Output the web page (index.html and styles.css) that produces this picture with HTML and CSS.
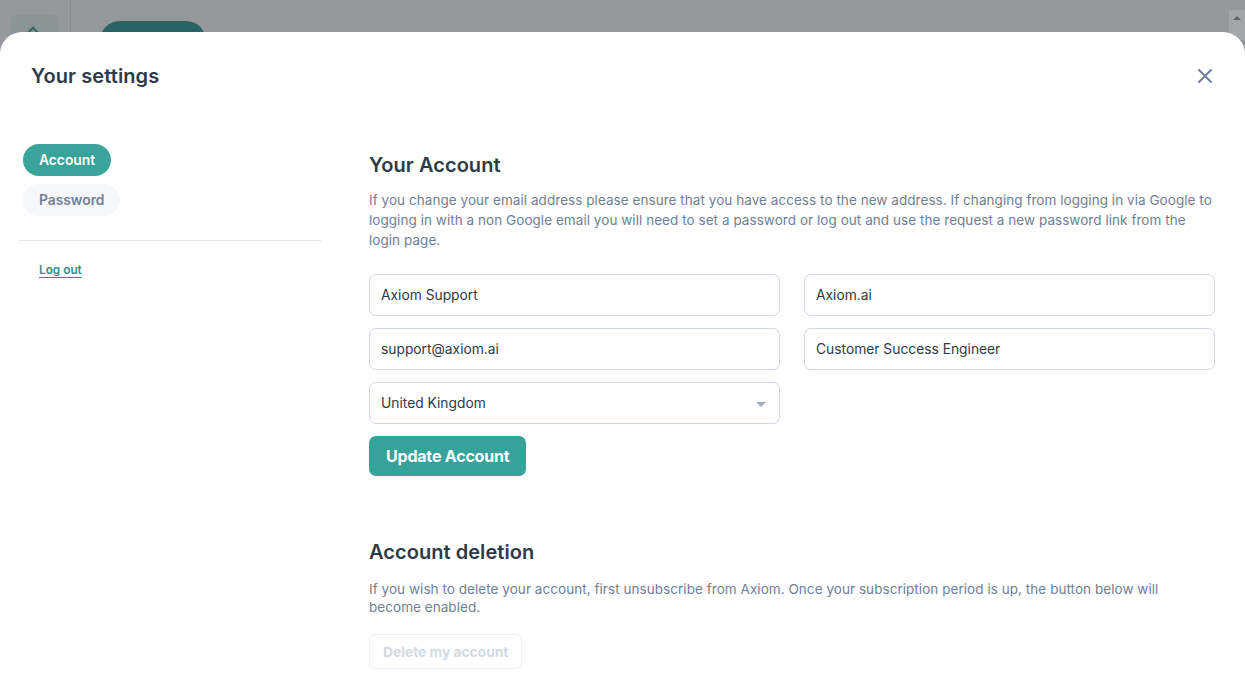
FILE: index.html
```html
<!DOCTYPE html>
<html>
<head>
<meta charset="utf-8">
<link rel="stylesheet" href="styles.css">
</head>
<body>
<div class="backdrop">
  <div class="bg-bar">
    <div class="bg-square"><span class="bg-caret"></span></div>
    <div class="bg-sep"></div>
    <div class="bg-btn"></div>
  </div>
  <div class="scrollbar"><span class="scroll-up"></span></div>
</div>
<div class="modal">
  <div class="modal-header">
    <h1 class="modal-title">Your settings</h1>
    <button class="close-btn" aria-label="Close">
      <svg width="14" height="14" viewBox="0 0 14 14"><path d="M1 1 L13 13 M13 1 L1 13" stroke="#718096" stroke-width="2" stroke-linecap="round"/></svg>
    </button>
  </div>
  <div class="modal-body">
    <aside class="sidebar">
      <nav class="tabs">
        <a class="tab tab-active">Account</a>
        <a class="tab">Password</a>
      </nav>
      <div class="divider"></div>
      <a class="logout">Log out</a>
    </aside>
    <main class="content">
      <section class="section">
        <h2 class="section-title">Your Account</h2>
        <p class="section-text">If you change your email address please ensure that you have access to the new address. If changing from logging in via Google to logging in with a non Google email you will need to set a password or log out and use the request a new password link from the login page.</p>
        <div class="form-grid">
          <div class="field">Axiom Support</div>
          <div class="field">Axiom.ai</div>
          <div class="field">support@axiom.ai</div>
          <div class="field">Customer Success Engineer</div>
          <div class="field field-select">United Kingdom<span class="select-caret"></span></div>
        </div>
        <button class="btn-primary">Update Account</button>
      </section>
      <section class="section section-delete">
        <h2 class="section-title">Account deletion</h2>
        <p class="section-text small">If you wish to delete your account, first unsubscribe from Axiom. Once your subscription period is up, the button below will become enabled.</p>
        <button class="btn-disabled">Delete my account</button>
      </section>
    </main>
  </div>
</div>
</body>
</html>
```

FILE: styles.css
```css
* { box-sizing: border-box; }
html, body { margin: 0; padding: 0; }
body {
  width: 1245px;
  height: 685px;
  overflow: hidden;
  background: #95989c;
  font-family: "Inter", "Noto Sans", sans-serif;
  position: relative;
}
.backdrop { height: 32px; position: relative; }
.bg-bar { display: flex; align-items: flex-start; height: 32px; }
.bg-square {
  width: 47px; height: 40px; margin: 15px 0 0 11px;
  background: #8b9497; border-radius: 6px; position: relative;
}
.bg-caret {
  position: absolute; left: 18px; top: 13px; width: 8px; height: 8px;
  border-left: 2px solid #2c6a66; border-top: 2px solid #2c6a66; transform: rotate(45deg);
}
.bg-sep { width: 1px; height: 32px; background: #8a8e92; margin-left: 12px; }
.bg-btn {
  width: 106px; height: 40px; margin: 21px 0 0 29px;
  background: #286463; border-radius: 20px;
}
.scrollbar {
  position: absolute; right: 0; top: 10px; width: 16px; height: 30px; background: #a3a6a9;
}
.scroll-up {
  position: absolute; left: 4px; top: 6px; width: 0; height: 0;
  border-left: 4px solid transparent; border-right: 4px solid transparent; border-bottom: 4px solid #5f6265;
}
.modal {
  position: absolute; left: 0; top: 32px; width: 1245px; height: 660px;
  background: #fff; border-radius: 22px 22px 0 0;
}
.modal-header {
  display: flex; justify-content: space-between; align-items: center;
  padding: 31px 32px 0 31px;
}
.modal-title {
  margin: 0; font-size: 20px; font-weight: 600; color: #2d3a48; letter-spacing: 0.1px; line-height: 26px;
}
.close-btn {
  border: 0; background: none; padding: 0; width: 14px; height: 14px; display: flex; margin-right: 1px;
}
.modal-body { display: flex; padding: 55px 30px 0 19px; }
.sidebar { width: 302px; flex: none; }
.tabs { display: flex; flex-direction: column; align-items: flex-start; gap: 8px; padding-left: 4px; }
.tab {
  display: inline-block; height: 32px; line-height: 32px; padding: 0 16px; border-radius: 16px;
  background: #f5f7fb; color: #718096; font-size: 13.8px; font-weight: 600;
}
.tab-active { background: #3aa39b; color: #fff; }
.divider { height: 1px; background: #e2e5e9; margin-top: 24px; }
.logout {
  display: inline-block; margin: 22px 0 0 20px; color: #2f8f88; font-size: 11.8px; font-weight: 600;
  text-decoration: underline; text-underline-offset: 3px;
}
.content { margin-left: 48px; width: 846px; padding-top: 8px; }
.section-title {
  margin: 0; font-size: 20px; font-weight: 600; color: #2d3a48; line-height: 26px; letter-spacing: 0.05px;
}
.section-text {
  margin: 12px 0 0; font-size: 13.5px; line-height: 20px; color: #718096; letter-spacing: 0.05px;
}
.section-text.small { line-height: 18px; margin-top: 15px; max-width: 810px; }
.form-grid {
  display: grid; grid-template-columns: 411px 411px; column-gap: 24px; row-gap: 12px; margin-top: 24px;
}
.field {
  height: 42px; border: 1px solid #cfd7e2; border-radius: 7px; padding: 0 11px;
  display: flex; align-items: center; font-size: 13.8px; color: #2d3a48; position: relative;
}
.select-caret {
  position: absolute; right: 13px; top: 19px; width: 0; height: 0;
  border-left: 5px solid transparent; border-right: 5px solid transparent; border-top: 5px solid #a0aec0;
}
.btn-primary {
  margin-top: 12px; height: 40px; padding: 0 17px; border: 0; border-radius: 7px;
  background: #36a39b; color: #fff; font-family: inherit; font-size: 16px; font-weight: 700; letter-spacing: -0.2px;
}
.section-delete { margin-top: 63px; }
.btn-disabled {
  margin-top: 18px; height: 35px; padding: 0 13px; border: 1px solid #eef1f5; border-radius: 6px;
  background: #fff; color: #d2d9e2; font-family: inherit; font-size: 13.8px; font-weight: 700;
}
```
